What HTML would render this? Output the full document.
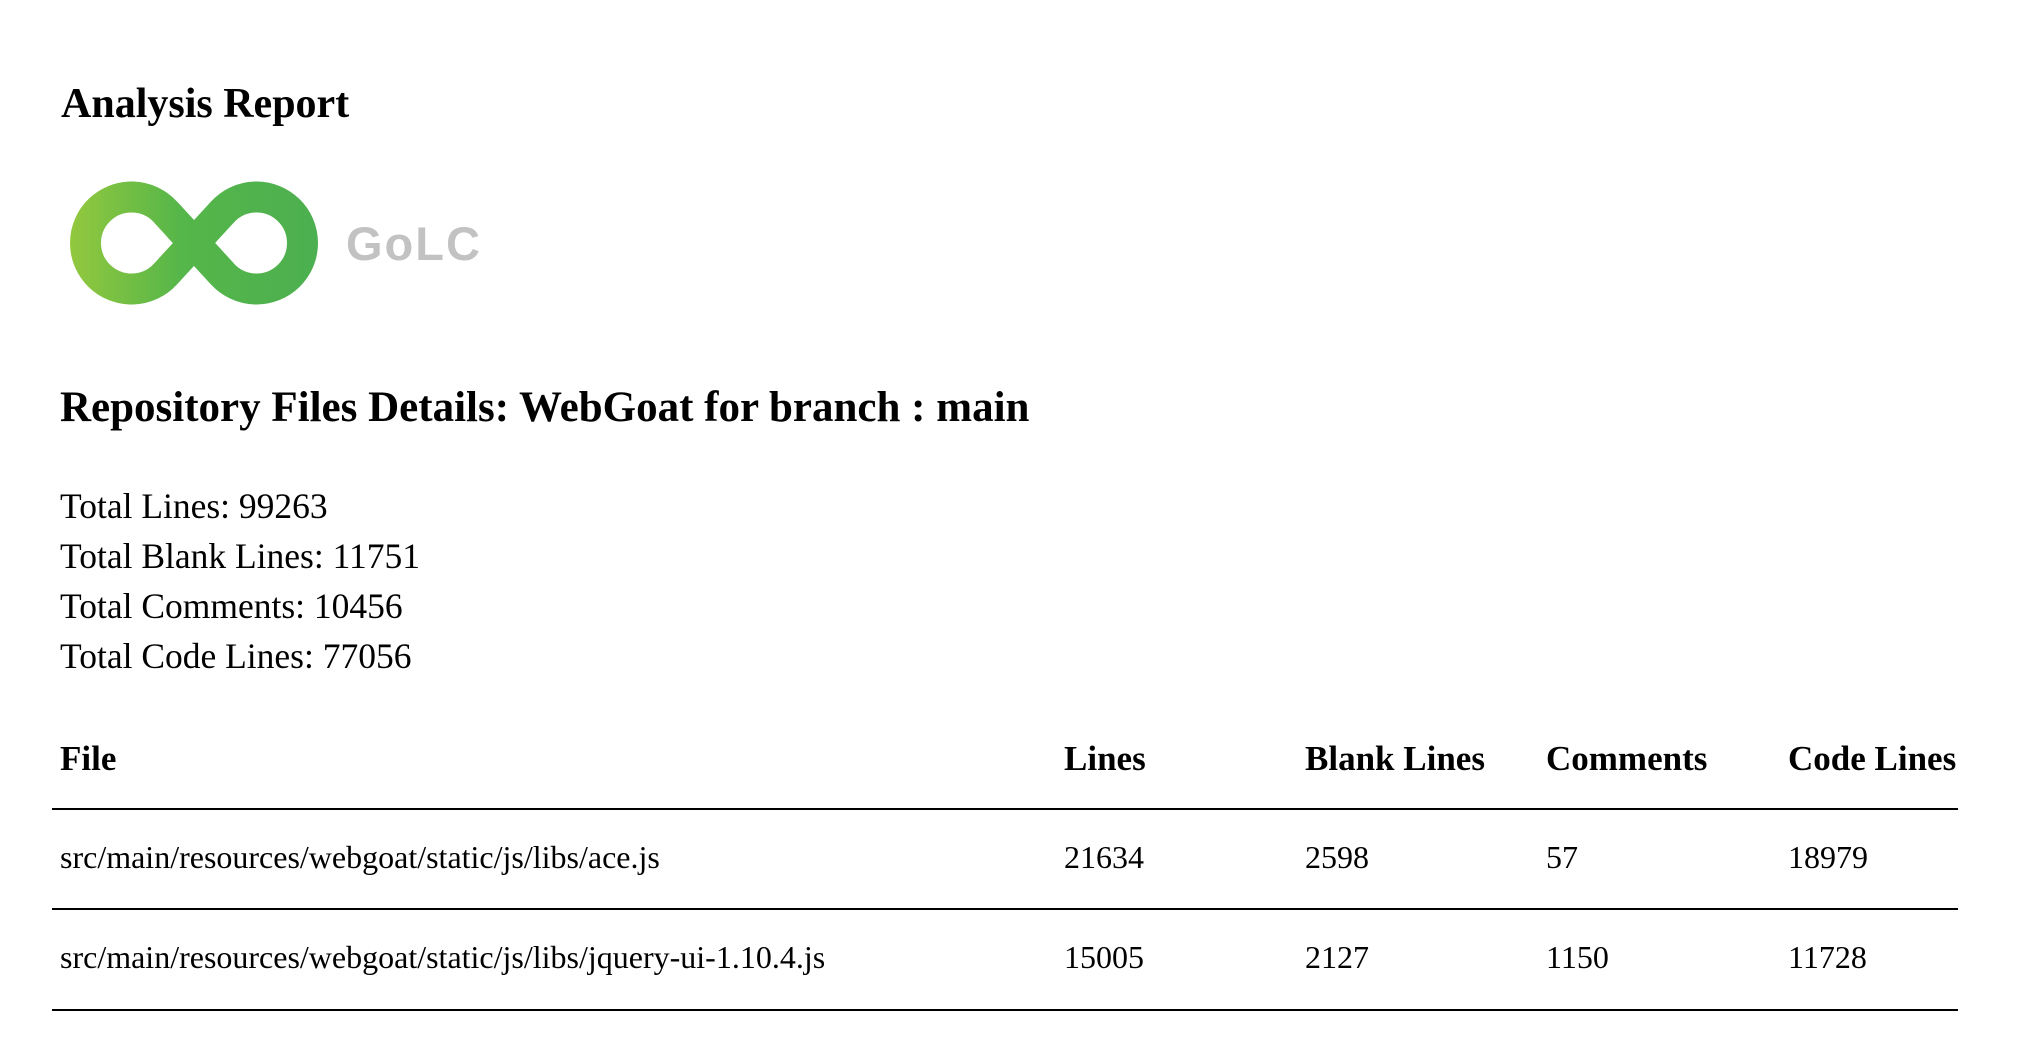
<!DOCTYPE html>
<html><head><meta charset="utf-8"><style>
html,body{margin:0;padding:0;background:#fff;width:2020px;height:1038px;overflow:hidden;position:relative;font-family:"Liberation Serif",serif;color:#000}
.a{position:absolute;white-space:nowrap;line-height:1}
.b{font-weight:bold}
.t{font-size:32px}
.s{font-size:35.5px}
.h{font-size:35px;font-weight:bold}
.hr{position:absolute;left:52px;width:1906px;height:2px;background:#000}
</style></head><body>
<div class="a b" style="left:61px;top:83px;font-size:42px">Analysis Report</div>
<svg style="position:absolute;left:0;top:0" width="520" height="330">
<defs><linearGradient id="g" x1="69" y1="0" x2="319" y2="0" gradientUnits="userSpaceOnUse">
<stop offset="0" stop-color="#93c83e"/><stop offset="0.45" stop-color="#55b649"/><stop offset="1" stop-color="#4caf50"/></linearGradient></defs>
<path d="M165.4,211.9 L222.6,274.1 A46,46 0 1 0 222.6,211.9 L165.4,274.1 A46,46 0 1 1 165.4,211.9 Z" fill="none" stroke="url(#g)" stroke-width="31"/>
<path d="M178,226 L210,260" stroke="#3d9a45" stroke-width="31" opacity="0.35"/>
<path d="M165.4,211.9 L222.6,274.1" stroke="url(#g)" stroke-width="31"/>
<text x="346" y="260" font-family="Liberation Sans, sans-serif" font-weight="bold" font-size="47" fill="#c2c2c2" letter-spacing="2">GoLC</text>
</svg>
<div class="a b" style="left:60px;top:386px;font-size:43px">Repository Files Details: WebGoat for branch : main</div>
<div class="a s" style="left:60px;top:489px">Total Lines: 99263</div>
<div class="a s" style="left:60px;top:539px">Total Blank Lines: 11751</div>
<div class="a s" style="left:60px;top:589px">Total Comments: 10456</div>
<div class="a s" style="left:60px;top:639px">Total Code Lines: 77056</div>

<div class="a h" style="left:60px;top:741px">File</div>
<div class="a h" style="left:1064px;top:741px">Lines</div>
<div class="a h" style="left:1305px;top:741px">Blank Lines</div>
<div class="a h" style="left:1546px;top:741px">Comments</div>
<div class="a h" style="left:1788px;top:741px">Code Lines</div>
<div class="hr" style="top:808px"></div>
<div class="a t" style="left:60px;top:841px">src/main/resources/webgoat/static/js/libs/ace.js</div>
<div class="a t" style="left:1064px;top:841px">21634</div>
<div class="a t" style="left:1305px;top:841px">2598</div>
<div class="a t" style="left:1546px;top:841px">57</div>
<div class="a t" style="left:1788px;top:841px">18979</div>
<div class="hr" style="top:908px"></div>
<div class="a t" style="left:60px;top:941px">src/main/resources/webgoat/static/js/libs/jquery-ui-1.10.4.js</div>
<div class="a t" style="left:1064px;top:941px">15005</div>
<div class="a t" style="left:1305px;top:941px">2127</div>
<div class="a t" style="left:1546px;top:941px">1150</div>
<div class="a t" style="left:1788px;top:941px">11728</div>
<div class="hr" style="top:1009px"></div>
</body></html>
